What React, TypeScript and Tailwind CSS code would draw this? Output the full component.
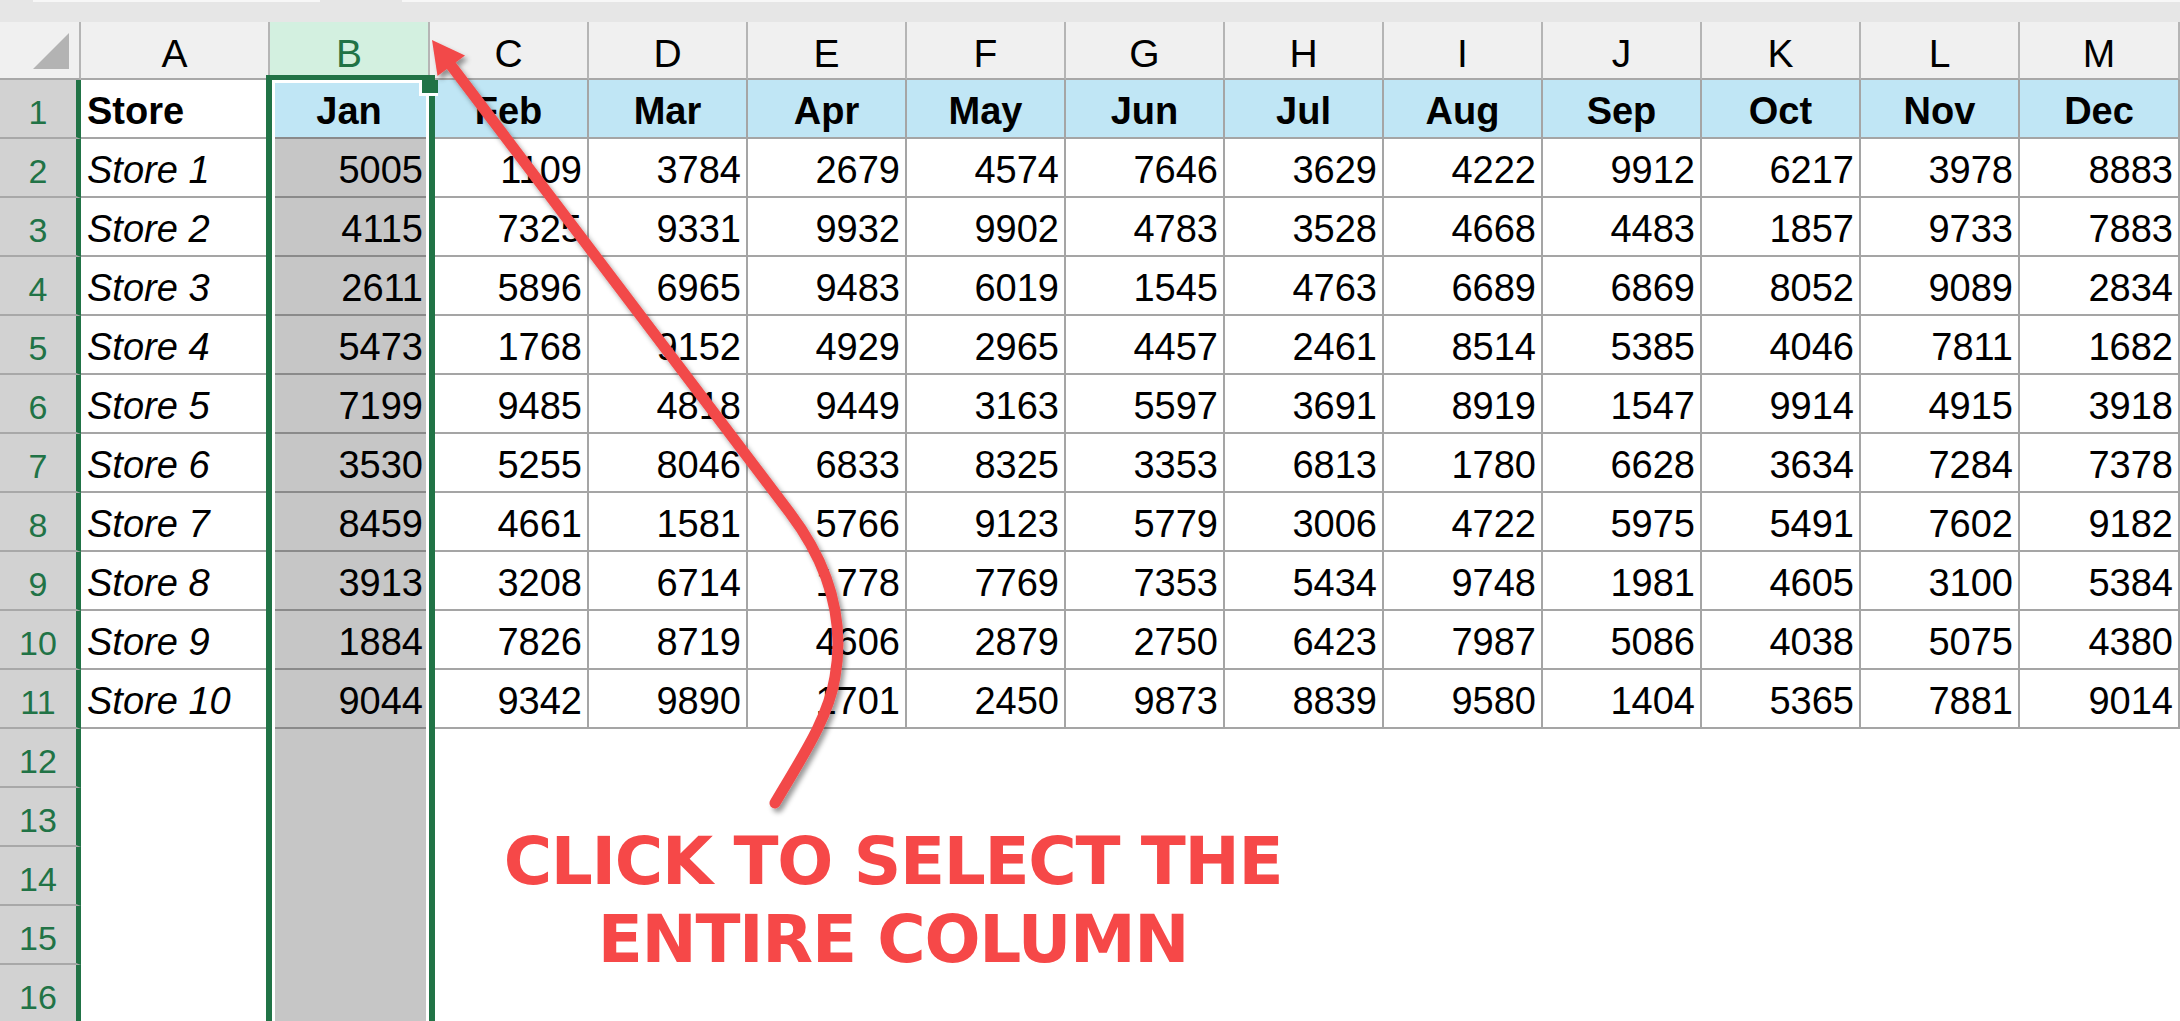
import React from 'react';

const COLS = ['A', 'B', 'C', 'D', 'E', 'F', 'G', 'H', 'I', 'J', 'K', 'L', 'M'];
const MONTHS = ['Jan', 'Feb', 'Mar', 'Apr', 'May', 'Jun', 'Jul', 'Aug', 'Sep', 'Oct', 'Nov', 'Dec'];
const DATA: number[][] = [
  [5005, 1109, 3784, 2679, 4574, 7646, 3629, 4222, 9912, 6217, 3978, 8883],
  [4115, 7325, 9331, 9932, 9902, 4783, 3528, 4668, 4483, 1857, 9733, 7883],
  [2611, 5896, 6965, 9483, 6019, 1545, 4763, 6689, 6869, 8052, 9089, 2834],
  [5473, 1768, 9152, 4929, 2965, 4457, 2461, 8514, 5385, 4046, 7811, 1682],
  [7199, 9485, 4818, 9449, 3163, 5597, 3691, 8919, 1547, 9914, 4915, 3918],
  [3530, 5255, 8046, 6833, 8325, 3353, 6813, 1780, 6628, 3634, 7284, 7378],
  [8459, 4661, 1581, 5766, 9123, 5779, 3006, 4722, 5975, 5491, 7602, 9182],
  [3913, 3208, 6714, 1778, 7769, 7353, 5434, 9748, 1981, 4605, 3100, 5384],
  [1884, 7826, 8719, 4606, 2879, 2750, 6423, 7987, 5086, 4038, 5075, 4380],
  [9044, 9342, 9890, 1701, 2450, 9873, 8839, 9580, 1404, 5365, 7881, 9014],
];

function ColumnHeader({ label }: { label: string }) {
  if (label === 'B') {
    return (
      <div className="h-[58px] bg-[#d3f0e0] border-r-2 border-b-2 border-r-[#b5b5b5] border-b-[#a8a8a8] flex items-end justify-center pb-[5px] text-[39px] leading-none text-[#217346]">
        {label}
      </div>
    );
  }
  return (
    <div className="h-[58px] bg-[#f0f0f0] border-r-2 border-b-2 border-r-[#b5b5b5] border-b-[#a8a8a8] flex items-end justify-center pb-[5px] text-[39px] leading-none text-black">
      {label}
    </div>
  );
}

function RowHeader({ n }: { n: number }) {
  return (
    <div className="h-[59px] bg-[#d2d2d2] border-b-2 border-b-[#a8a8a8] border-r-[5px] border-r-[#217346] flex items-end justify-center pb-[8px] text-[34px] leading-none text-[#217346]">
      {n}
    </div>
  );
}

function StoreCell({ r }: { r: number }) {
  if (r === 1) {
    return (
      <div className="h-[59px] bg-white border-r-2 border-b-2 border-[#a5a5a5] flex items-end pl-[6px] pb-[7px] text-[38px] leading-none font-bold">
        Store
      </div>
    );
  }
  if (r <= 11) {
    return (
      <div className="h-[59px] bg-white border-r-2 border-b-2 border-[#a5a5a5] flex items-end pl-[6px] pb-[7px] text-[38px] leading-none italic">
        {`Store ${r - 1}`}
      </div>
    );
  }
  return <div className="h-[59px] bg-white" />;
}

function JanCell({ r }: { r: number }) {
  if (r === 1) {
    return (
      <div className="h-[59px] bg-[#c0e6f5] border-r-2 border-b-2 border-r-[#a5a5a5] border-b-[#8a8a8a] flex items-end justify-center pb-[7px] text-[38px] leading-none font-bold">
        Jan
      </div>
    );
  }
  if (r <= 11) {
    return (
      <div className="h-[59px] bg-[#c6c6c6] border-r-2 border-b-2 border-r-[#a5a5a5] border-b-[#8a8a8a] flex items-end justify-end pr-[5px] pb-[7px] text-[38px] leading-none">
        {DATA[r - 2][0]}
      </div>
    );
  }
  return <div className="h-[59px] bg-[#c6c6c6]" />;
}

function DataCell({ r, c }: { r: number; c: number }) {
  if (r === 1) {
    return (
      <div className="h-[59px] bg-[#c0e6f5] border-r-2 border-b-2 border-[#a5a5a5] flex items-end justify-center pb-[7px] text-[38px] leading-none font-bold">
        {MONTHS[c]}
      </div>
    );
  }
  if (r <= 11) {
    return (
      <div className="h-[59px] bg-white border-r-2 border-b-2 border-[#a5a5a5] flex items-end justify-end pr-[5px] pb-[7px] text-[38px] leading-none">
        {DATA[r - 2][c]}
      </div>
    );
  }
  return <div className="h-[59px] bg-white" />;
}

export default function App() {
  const rows = Array.from({ length: 16 }, (_, i) => i + 1);
  return (
    <div className="relative w-[2180px] h-[1021px] overflow-hidden bg-white font-['Liberation_Sans',Arial,sans-serif] text-black">
      {/* formula bar remnant */}
      <div className="h-[22px] bg-[#e6e6e6] flex flex-col">
        <div className="h-[2px] flex">
          <div className="w-[33px] bg-[#e6e6e6]" />
          <div className="w-[287px] bg-[#f7f7f7]" />
          <div className="w-[82px] bg-[#e6e6e6]" />
          <div className="flex-1 bg-[#f7f7f7]" />
        </div>
      </div>

      {/* sheet grid */}
      <div className="grid grid-cols-[81px_189px_160px_repeat(10,159px)_160px]">
        <div className="h-[58px] bg-[#f0f0f0] border-r-2 border-b-2 border-r-[#b5b5b5] border-b-[#a8a8a8] flex justify-end items-end pr-[10px] pb-[9px]">
          <svg width="36" height="36" viewBox="0 0 36 36">
            <polygon points="36,0 36,36 0,36" fill="#b3b3b3" />
          </svg>
        </div>
        {COLS.map((c) => (
          <ColumnHeader key={c} label={c} />
        ))}
        {rows.map((r) => (
          <React.Fragment key={r}>
            <RowHeader n={r} />
            <StoreCell r={r} />
            <JanCell r={r} />
            {Array.from({ length: 11 }, (_, k) => (
              <DataCell key={k} r={r} c={k + 1} />
            ))}
          </React.Fragment>
        ))}
      </div>

      {/* selection outline for column B */}
      <div className="absolute left-[266px] top-[75px] w-[169px] h-[980px] border-x-[6px] border-t-[5px] border-[#217346]">
        <div className="h-full border-x-[3px] border-t-[3px] border-white" />
      </div>
      {/* fill handle */}
      <div className="absolute left-[419px] top-[80px] w-[19px] h-[16px] bg-[#217346] border-l-[3px] border-b-[3px] border-white" />

      {/* annotation arrow */}
      <svg className="absolute left-0 top-0 pointer-events-none" width="2180" height="1021" viewBox="0 0 2180 1021">
        <defs>
          <filter id="shadow" x="-20%" y="-20%" width="140%" height="140%">
            <feDropShadow dx="3" dy="4" stdDeviation="2.5" floodColor="#000" floodOpacity="0.4" />
          </filter>
        </defs>
        <g filter="url(#shadow)">
          <path
            d="M 450 64 L 790 513 C 830 566, 845 620, 835 677 C 828 720, 800 760, 775 803"
            fill="none"
            stroke="#f24a4a"
            strokeWidth="11"
            strokeLinecap="round"
            strokeLinejoin="round"
          />
          <polygon points="432,40 465,55.6 437.5,76" fill="#f24a4a" />
        </g>
      </svg>

      {/* annotation text */}
      <div className="absolute left-[493px] top-[823px] w-[800px] text-center font-['DejaVu_Sans',sans-serif] font-bold text-[66px] leading-[78px] tracking-[-1.3px] text-[#f64848]">
        <div>CLICK TO SELECT THE</div>
        <div>ENTIRE COLUMN</div>
      </div>
    </div>
  );
}
